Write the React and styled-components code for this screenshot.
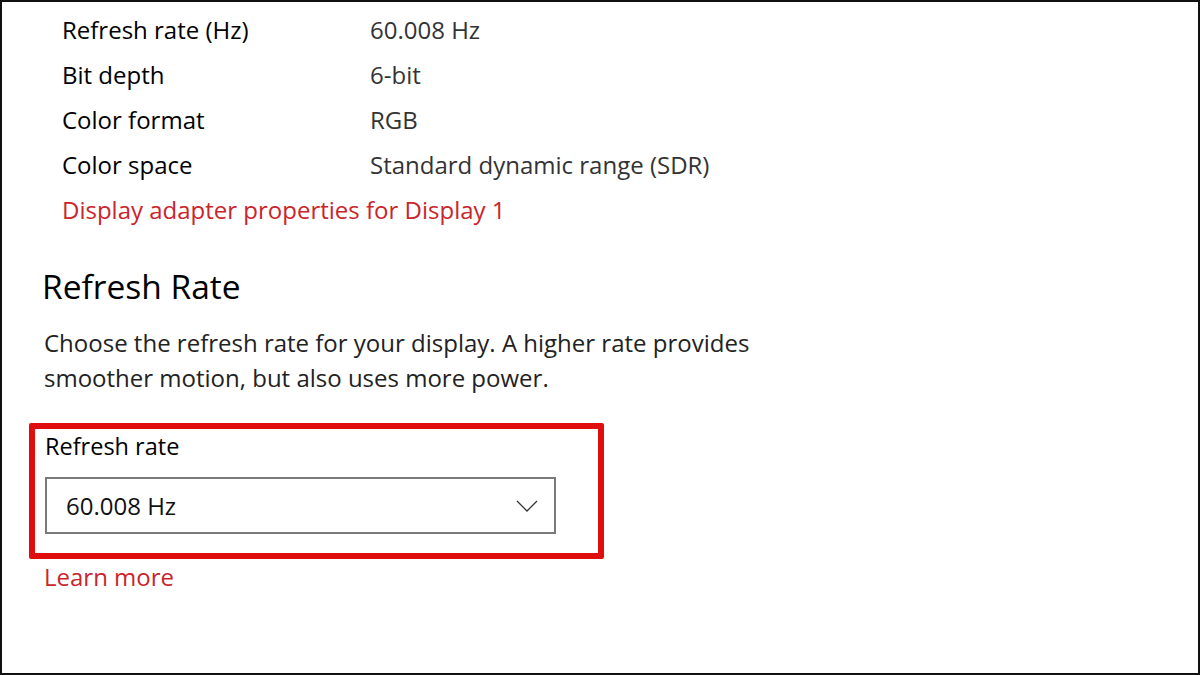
import React from 'react'
import styled, { createGlobalStyle } from 'styled-components'

const GlobalStyle = createGlobalStyle`
  html, body {
    margin: 0;
    padding: 0;
    background: #fff;
  }
  body {
    font-family: "Open Sans", "Noto Sans", sans-serif;
    color: #000;
  }
`

const Frame = styled.div`
  box-sizing: border-box;
  width: 1200px;
  height: 675px;
  border: 2px solid #111;
  overflow: hidden;
  background: #fff;
`

const InfoTable = styled.div`
  display: grid;
  grid-template-columns: 308px auto;
  grid-auto-rows: 45px;
  padding: 5px 0 0 60px;
  font-size: 24px;
`

const Label = styled.div`
  color: #000;
  line-height: 45px;
`

const Value = styled.div`
  color: #333;
  line-height: 45px;
`

const Link = styled.a`
  display: block;
  color: #c9252c;
  font-size: 24px;
  line-height: ${({ lead }) => lead}px;
  margin-left: ${({ indent }) => indent}px;
  text-decoration: none;
`

const Section = styled.section`
  padding: 0 0 0 40px;
  margin-top: 32px;
`

const Heading = styled.h2`
  margin: 0;
  font-size: 33.5px;
  font-weight: 400;
  line-height: 44px;
`

const Description = styled.p`
  margin: 17px 0 0 2px;
  width: 780px;
  font-size: 24px;
  line-height: 35px;
  color: #222;
`

const Highlight = styled.div`
  box-sizing: border-box;
  width: 575px;
  height: 136px;
  margin: 28px 0 0 -13px;
  border: 6px solid #e00d0d;
  border-radius: 2px;
  padding: 0 0 0 10px;
`

const FieldLabel = styled.div`
  font-size: 23.5px;
  line-height: 34px;
`

const Select = styled.div`
  box-sizing: border-box;
  display: flex;
  align-items: center;
  justify-content: space-between;
  width: 511px;
  height: 57px;
  margin-top: 14px;
  border: 2px solid #7a7a7a;
  padding: 0 16px 0 19px;
  font-size: 24px;
  color: #111;
`

const Chevron = () => (
  <svg width="22" height="12" viewBox="0 0 22 12" fill="none">
    <path d="M1 1l10 10L21 1" stroke="#333" strokeWidth="1.3" />
  </svg>
)

const rows = [
  ['Refresh rate (Hz)', '60.008 Hz'],
  ['Bit depth', '6-bit'],
  ['Color format', 'RGB'],
  ['Color space', 'Standard dynamic range (SDR)'],
]

export default function App() {
  return (
    <>
      <GlobalStyle />
      <Frame>
        <InfoTable>
          {rows.map(([label, value]) => (
            <React.Fragment key={label}>
              <Label>{label}</Label>
              <Value>{value}</Value>
            </React.Fragment>
          ))}
        </InfoTable>
        <Link indent={60} lead={45}>Display adapter properties for Display 1</Link>
        <Section>
          <Heading>Refresh Rate</Heading>
          <Description>
            Choose the refresh rate for your display. A higher rate provides smoother motion,
            but also uses more power.
          </Description>
          <Highlight>
            <FieldLabel>Refresh rate</FieldLabel>
            <Select>
              <span>60.008 Hz</span>
              <Chevron />
            </Select>
          </Highlight>
          <Link indent={2} lead={36}>Learn more</Link>
        </Section>
      </Frame>
    </>
  )
}
